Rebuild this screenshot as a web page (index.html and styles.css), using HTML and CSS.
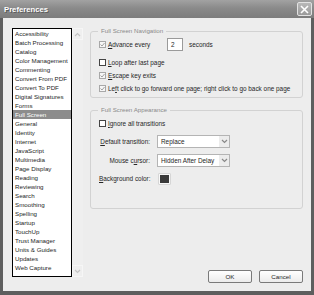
FILE: index.html
```html
<!DOCTYPE html>
<html lang="en">
<head>
    <meta charset="UTF-8">
    <title>Preferences</title>
    <link rel="stylesheet" href="styles.css">
</head>
<body>
    <div class="window">
        <div class="titlebar">
            <span class="title">Preferences</span>
            <span class="close">
                <svg width="9" height="9" viewBox="0 0 9 9"><path d="M1 1L8 8M8 1L1 8" stroke="#fff" stroke-width="1.6"/></svg>
            </span>
        </div>

        <div class="content">
            <div class="categories">
                <ul class="category-list">
                    <li>Accessibility</li>
                    <li>Batch Processing</li>
                    <li>Catalog</li>
                    <li>Color Management</li>
                    <li>Commenting</li>
                    <li>Convert From PDF</li>
                    <li>Convert To PDF</li>
                    <li>Digital Signatures</li>
                    <li>Forms</li>
                    <li class="selected">Full Screen</li>
                    <li>General</li>
                    <li>Identity</li>
                    <li>Internet</li>
                    <li>JavaScript</li>
                    <li>Multimedia</li>
                    <li>Page Display</li>
                    <li>Reading</li>
                    <li>Reviewing</li>
                    <li>Search</li>
                    <li>Smoothing</li>
                    <li>Spelling</li>
                    <li>Startup</li>
                    <li>TouchUp</li>
                    <li>Trust Manager</li>
                    <li>Units &amp; Guides</li>
                    <li>Updates</li>
                    <li>Web Capture</li>
                </ul>
                <div class="scrollbar">
                    <span class="arrow"><svg width="7" height="5" viewBox="0 0 7 5"><path d="M1 4L3.5 1.5L6 4" fill="none" stroke="#c4c4c4" stroke-width="1.2"/></svg></span>
                    <span class="arrow"><svg width="7" height="5" viewBox="0 0 7 5"><path d="M1 1L3.5 3.5L6 1" fill="none" stroke="#c4c4c4" stroke-width="1.2"/></svg></span>
                </div>
            </div>

            <div class="panel">
                <fieldset class="group navigation">
                    <legend>Full Screen Navigation</legend>
                    <div class="row first">
                        <span class="check checked"></span>
                        <span class="advance-label"><u>A</u>dvance every</span>
                        <span class="number">2</span>
                        <span class="unit">seconds</span>
                    </div>
                    <div class="row spaced">
                        <span class="check"></span>
                        <span><u>L</u>oop after last page</span>
                    </div>
                    <div class="row">
                        <span class="check checked"></span>
                        <span><u>E</u>scape key exits</span>
                    </div>
                    <div class="row">
                        <span class="check checked"></span>
                        <span>Le<u>f</u>t click to go forward one page; right click to go back one page</span>
                    </div>
                </fieldset>

                <fieldset class="group appearance">
                    <legend>Full Screen Appearance</legend>
                    <div class="row first">
                        <span class="check"></span>
                        <span><u>I</u>gnore all transitions</span>
                    </div>
                    <div class="field transition">
                        <span class="field-label"><u>D</u>efault transition:</span>
                        <span class="select">Replace<span class="drop"></span></span>
                    </div>
                    <div class="field cursor">
                        <span class="field-label">Mouse c<u>u</u>rsor:</span>
                        <span class="select">Hidden After Delay<span class="drop"></span></span>
                    </div>
                    <div class="field color">
                        <span class="field-label"><u>B</u>ackground color:</span>
                        <span class="swatch"><span class="swatch-fill"></span></span>
                    </div>
                </fieldset>

                <div class="buttons">
                    <button>OK</button>
                    <button>Cancel</button>
                </div>
            </div>
        </div>
    </div>
</body>
</html>
```

FILE: styles.css
```css
html, body {
    margin: 0;
    padding: 0;
}

body {
    width: 314px;
    height: 295px;
    font-family: "Liberation Sans", Arial, sans-serif;
    font-size: 6.2px;
    color: #262626;
}

.window {
    height: 295px;
    box-sizing: border-box;
    display: flex;
    flex-direction: column;
    background: #5e5e5e;
    padding-bottom: 4px;
}

.titlebar {
    height: 18px;
    display: flex;
    align-items: center;
    justify-content: space-between;
    padding: 0 2px 0 4px;
    background: linear-gradient(#a2a2a2, #8a8a8a 45%, #7c7c7c);
}

.title {
    font-size: 7.7px;
    font-weight: bold;
    color: #fff;
    text-shadow: 1px 1px 0 #5a5a5a;
}

.close {
    width: 13px;
    height: 12px;
    display: flex;
    align-items: center;
    justify-content: center;
    background: linear-gradient(#b8b8b8, #9a9a9a);
    border: 1px solid #e2e2e2;
    border-radius: 2px;
}

.content {
    flex: 1;
    margin: 0 3px;
    display: flex;
    padding: 10px 8px 8px 9px;
    background: #ededed;
}

.categories {
    display: flex;
    height: 249px;
    align-self: flex-start;
}

.category-list {
    list-style: none;
    margin: 0;
    padding: 0;
    width: 58px;
    border: 1px solid #000;
    background: #fff;
}

.category-list li {
    height: 9px;
    line-height: 9px;
    padding-left: 2px;
    white-space: nowrap;
}

.category-list li.selected {
    background: #8c8c8c;
    color: #fff;
}

.scrollbar {
    width: 11px;
    display: flex;
    flex-direction: column;
    justify-content: space-between;
    background: #efefef;
}

.scrollbar .arrow {
    height: 10px;
    display: flex;
    align-items: center;
    justify-content: center;
    border: 1px solid #f6f6f6;
}

.panel {
    flex: 1;
    margin-left: 7px;
    margin-top: -1px;
    display: flex;
    flex-direction: column;
}

.group {
    margin: 0;
    padding: 0 8px;
    border: 1px solid #d2d2d2;
    border-radius: 3px;
    min-width: 0;
    font-size: 6.4px;
}

.group legend {
    margin-left: -1px;
    padding: 0 3px;
    line-height: 8px;
    font-size: 6.2px;
    color: #8a8a8a;
}

.navigation {
    padding-bottom: 2px;
}

.appearance {
    margin-top: 8px;
    padding-bottom: 23px;
}

.row {
    height: 13px;
    display: flex;
    align-items: center;
    white-space: nowrap;
}

.navigation .row.first {
    margin-top: 3px;
}

.row.spaced {
    margin-top: 5px;
}

.appearance .row.first {
    margin-top: 3px;
}

.check {
    width: 5px;
    height: 5px;
    margin-right: 2px;
    border: 1px solid #444;
    background: #fff;
    flex-shrink: 0;
}

.check.checked {
    border-color: #a8a8a8;
    background: #f6f6f6 url("data:image/svg+xml,%3Csvg xmlns='http://www.w3.org/2000/svg' width='5' height='5'%3E%3Cpath d='M0.5 2.5L2 4L4.5 1' fill='none' stroke='%23a0a0a0' stroke-width='1'/%3E%3C/svg%3E") no-repeat center;
}

.advance-label {
    width: 59px;
}

.number {
    width: 11px;
    height: 11px;
    line-height: 11px;
    padding-left: 3px;
    border: 1px solid #9a9a9a;
    background: #fff;
}

.unit {
    margin-left: 6px;
}

.field {
    height: 13px;
    display: flex;
    align-items: center;
    white-space: nowrap;
}

.field.transition {
    margin-top: 5px;
}

.field.cursor {
    margin-top: 6px;
}

.field.color {
    margin-top: 5px;
}

.field-label {
    width: 51px;
    margin-right: 7px;
    text-align: right;
}

.select {
    position: relative;
    width: 68px;
    height: 11px;
    line-height: 11px;
    padding-left: 3px;
    border: 1px solid #b4b4b4;
    background: #fff;
}

.drop {
    position: absolute;
    top: 0;
    right: 0;
    width: 10px;
    height: 11px;
    background: #ececec url("data:image/svg+xml,%3Csvg xmlns='http://www.w3.org/2000/svg' width='7' height='5'%3E%3Cpath d='M1 1L3.5 3.5L6 1' fill='none' stroke='%23888' stroke-width='1.2'/%3E%3C/svg%3E") no-repeat center;
}

.swatch {
    width: 9px;
    height: 8px;
    margin-left: 1px;
    padding: 1px;
    border: 1px solid #d6d6d6;
    border-radius: 1px;
    background: #f8f8f8;
}

.swatch-fill {
    display: block;
    width: 9px;
    height: 8px;
    background: #3a3a3a;
}

.buttons {
    margin-top: auto;
    display: flex;
    justify-content: flex-end;
    gap: 7px;
}

.buttons button {
    width: 44px;
    height: 13px;
    padding: 0;
    font-family: "Liberation Sans", Arial, sans-serif;
    font-size: 6.2px;
    color: #262626;
    border: 1px solid #7a7a7a;
    border-radius: 2px;
    background: linear-gradient(#ffffff, #ececec);
}
```
